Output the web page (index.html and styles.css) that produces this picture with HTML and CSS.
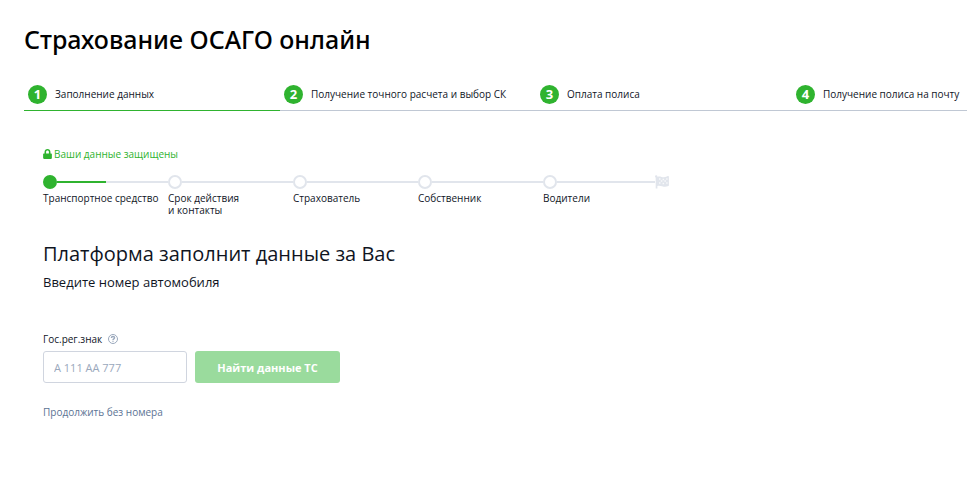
FILE: index.html
```html
<!DOCTYPE html>
<html lang="ru">
<head>
<meta charset="utf-8">
<meta name="viewport" content="width=device-width, initial-scale=1">
<title>Страхование ОСАГО онлайн</title>
<link rel="stylesheet" href="styles.css">
</head>
<body>
<main class="page">
  <h1 class="title">Страхование ОСАГО онлайн</h1>

  <ol class="steps">
    <li class="step step-active"><span class="step-number">1</span>Заполнение данных</li>
    <li class="step"><span class="step-number">2</span>Получение точного расчета и выбор СК</li>
    <li class="step"><span class="step-number">3</span>Оплата полиса</li>
    <li class="step"><span class="step-number">4</span>Получение полиса на почту</li>
  </ol>

  <section class="content">
    <p class="secure">
      <svg class="lock" viewBox="0 0 448 512" aria-hidden="true"><path fill="currentColor" d="M400 224h-24v-72C376 68 308 0 224 0S72 68 72 152v72H48c-27 0-48 21-48 48v192c0 27 21 48 48 48h352c27 0 48-21 48-48V272c0-27-21-48-48-48zm-104 0H152v-72c0-40 32-72 72-72s72 32 72 72z"/></svg>
      Ваши данные защищены
    </p>

    <ol class="progress">
      <li class="stage stage-active"><span class="track"></span><span class="stage-name">Транспортное средство</span></li>
      <li class="stage"><span class="track"></span><span class="stage-name">Срок действия<br>и контакты</span></li>
      <li class="stage"><span class="track"></span><span class="stage-name">Страхователь</span></li>
      <li class="stage"><span class="track"></span><span class="stage-name">Собственник</span></li>
      <li class="stage stage-last"><span class="track"></span><span class="stage-name">Водители</span></li>
      <li class="finish">
        <svg class="flag" viewBox="0 0 14 14" aria-hidden="true">
          <path fill="#e1e5ec" d="M0 1.500a1.200 1.200 0 0 1 2.400 0v.3C5 .8 7 2.400 9 2.200c1.600-.1 3-.8 4-1.200.5-.1.900.1.900.600v8.600c0 .4-.2.700-.5.800-4.700 2.200-6.400-.9-11-.1V13.400H.7V2.600A1.200 1.200 0 0 1 0 1.500z"/>
          <path fill="#fff" fill-opacity=".75" d="M4 3.300h1.500v1.500H4zM7.600 3.800h1.500v1.500H7.600zM11.200 3.200h1.400v1.500h-1.400zM5.800 5.300h1.500v1.500H5.800zM9.400 5.300h1.500v1.500H9.400zM4 7.300h1.500v1.500H4zM7.600 7.700h1.500v1.500H7.600zM11.200 7.200h1.400v1.500h-1.400z"/>
        </svg>
      </li>
    </ol>

    <h2 class="heading">Платформа заполнит данные за Вас</h2>
    <p class="lead">Введите номер автомобиля</p>

    <form class="form">
      <div class="label-row">
        <label for="plate">Гос.рег.знак</label>
        <svg class="help" viewBox="0 0 10 10" fill="none" stroke="currentColor" aria-hidden="true"><circle cx="5" cy="5" r="4.500" stroke-width="1"/><path stroke-width="1.400" d="M3.400 4c0-1 .7-1.500 1.600-1.500s1.600.5 1.600 1.300C6.600 4.900 5 4.800 5 6M5 6.700v1.100"/></svg>
      </div>
      <div class="controls">
        <input class="plate" id="plate" type="text" placeholder="А 111 АА 777">
        <button class="submit" type="button">Найти данные ТС</button>
      </div>
    </form>

    <a class="skip" href="#">Продолжить без номера</a>
  </section>
</main>
</body>
</html>
```
FILE: styles.css
```css
*,
*::before,
*::after {
  box-sizing: border-box;
}

body {
  margin: 0;
  background: #fff;
  color: #10151f;
  font: 10px/12px "Open Sans", sans-serif;
}

h1, h2, p, ol {
  margin: 0;
  padding: 0;
}

ol {
  list-style: none;
}

.page {
  padding: 23px 0 24px 24px;
  overflow: hidden;
}

.title {
  color: #000;
  font-family: "Noto Sans", "Open Sans", sans-serif;
  font-size: 25px;
  font-weight: 500;
  line-height: 32px;
}

.steps {
  display: flex;
  margin-top: 24px;
}

.step {
  display: flex;
  flex: 1 0 256px;
  align-items: center;
  gap: 8px;
  height: 32px;
  padding: 0 4px 1px;
  border-bottom: 1px solid #c0c8d4;
}

.step-active {
  border-bottom-color: #2fb32f;
}

.step-number {
  width: 19px;
  height: 19px;
  border-radius: 50%;
  background: #2fb32f;
  color: #fff;
  font-size: 13px;
  font-weight: 700;
  line-height: 19px;
  text-align: center;
}

.content {
  padding: 37px 19px 0;
}

.secure {
  display: flex;
  align-items: center;
  gap: 2px;
  color: #2fb32f;
  font-weight: 500;
}

.lock {
  width: 9px;
  height: 10px;
}

.progress {
  display: flex;
  margin-top: 15px;
}

.stage {
  flex: 0 0 125px;
}

.stage-last {
  flex-basis: 112px;
}

.track {
  display: flex;
  align-items: center;
  height: 14px;
}

.track::before {
  content: "";
  width: 14px;
  height: 14px;
  border: 2px solid #e1e5ec;
  border-radius: 50%;
}

.track::after {
  content: "";
  flex: 1;
  height: 2px;
  background: #e1e5ec;
}

.stage-active .track::before {
  border-color: #2fb32f;
  background: #2fb32f;
}

.stage-active .track::after {
  background: linear-gradient(to right, #2fb32f 49px, #e1e5ec 49px);
}

.stage-name {
  display: block;
  margin-top: 3px;
  white-space: nowrap;
}

.flag {
  display: block;
  width: 14px;
  height: 14px;
}

.heading {
  margin-top: 25px;
  font-size: 20px;
  font-weight: 500;
  line-height: 26px;
}

.lead {
  margin-top: 6px;
  font-size: 13px;
  line-height: 18px;
}

.form {
  margin-top: 42px;
}

.label-row {
  display: flex;
  align-items: center;
  gap: 6px;
  font-weight: 500;
}

.help {
  width: 10px;
  height: 10px;
  color: #9aa8bc;
}

.controls {
  display: flex;
  gap: 8px;
  margin-top: 6px;
}

.plate {
  width: 144px;
  height: 32px;
  padding: 0 10px;
  border: 1px solid #d0d5df;
  border-radius: 3px;
  color: #10151f;
  font: 11px "Open Sans", sans-serif;
}

.plate::placeholder {
  color: #9aa8bc;
}

.submit {
  width: 145px;
  height: 32px;
  padding: 0;
  border: 0;
  border-radius: 3px;
  background: #9adb9d;
  color: #fff;
  font: 700 11px "Open Sans", sans-serif;
}

.skip {
  display: inline-block;
  margin-top: 23px;
  color: #5b7394;
  text-decoration: none;
}
```
